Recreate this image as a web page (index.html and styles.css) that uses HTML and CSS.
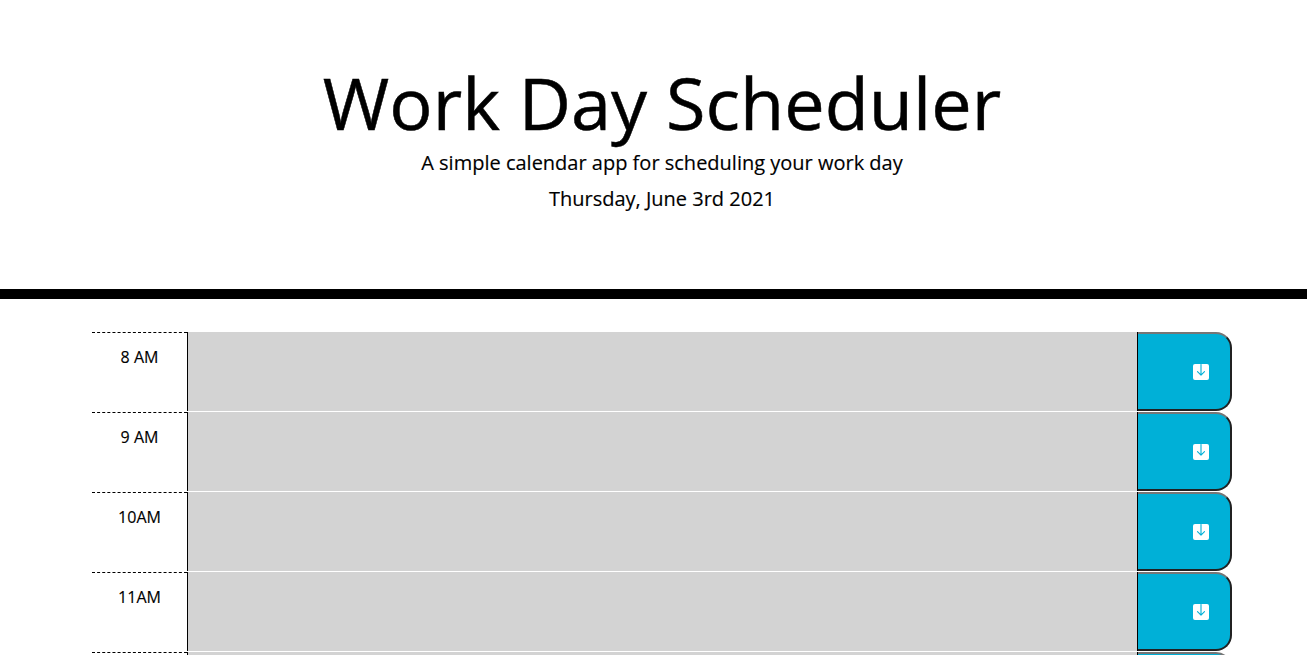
FILE: index.html
```html
<!DOCTYPE html>
<html lang="en">
<head>
<meta charset="utf-8">
<title>Work Day Scheduler</title>
<link rel="stylesheet" href="styles.css">
</head>
<body>
<header class="jumbotron">
<h1 class="title">Work Day Scheduler</h1>
<p class="lead">A simple calendar app for scheduling your work day</p>
<p class="lead">Thursday, June 3rd 2021</p>
</header>
<main class="container"></main>
<template id="row">
<div class="row">
<div class="hour"></div>
<textarea class="description" aria-label="Description"></textarea>
<button class="save" aria-label="Save"><svg width="16" height="16" viewBox="0 0 16 16"><rect width="16" height="16" rx="2" fill="#fff"/><path d="M8 .5V11M4.500 7.600l3.500 3.500 3.500-3.500" fill="none" stroke="#00b0d7" stroke-width="1.1" stroke-linecap="round" stroke-linejoin="round"/></svg></button>
</div>
</template>
<script src="script.js"></script>
</body>
</html>
```
FILE: styles.css
```css
* { box-sizing: border-box; }
body { margin: 0; height: 655px; overflow: hidden; font: 16px/24px "Open Sans", sans-serif; color: #000; background: #fff; -webkit-text-stroke: .15px #000; }
.jumbotron { height: 299px; padding: 62px 0 0 17px; text-align: center; border-bottom: 10px solid #000; margin-bottom: 33px; }
.title { margin: 0 0 6px; font-size: 72px; font-weight: 400; line-height: 80px; letter-spacing: .05px; -webkit-text-stroke-width: .5px; }
.lead { margin: 0 0 6px; font-size: 20px; line-height: 30px; }
.container { width: 1140px; height: 323px; margin-left: 92px; overflow: hidden; }
.row { display: flex; height: 80px; }
.hour { width: 95px; padding-top: 12px; text-align: center; border-top: 1px dashed #000; }
.description { width: 951px; height: 79px; margin: 0; padding: 0; border: 0; border-left: 1px solid #000; border-right: 1px solid #000; background: #d3d3d3; resize: none; }
.save { width: 94px; height: 79px; padding: 0 0 0 34px; border: 2px solid; border-color: #767676 #212121 #212121; border-left: 0; border-radius: 0 16px 16px 0; background: #00b0d7; color: #fff; }
.save svg { display: inline-block; vertical-align: middle; }
```
FILE: script.js
```js
const template = document.getElementById("row");
const container = document.querySelector(".container");
for (const label of ["8 AM", "9 AM", "10AM", "11AM", ""]) {
  const row = template.content.cloneNode(true);
  row.querySelector(".hour").textContent = label;
  container.append(row);
}
```
